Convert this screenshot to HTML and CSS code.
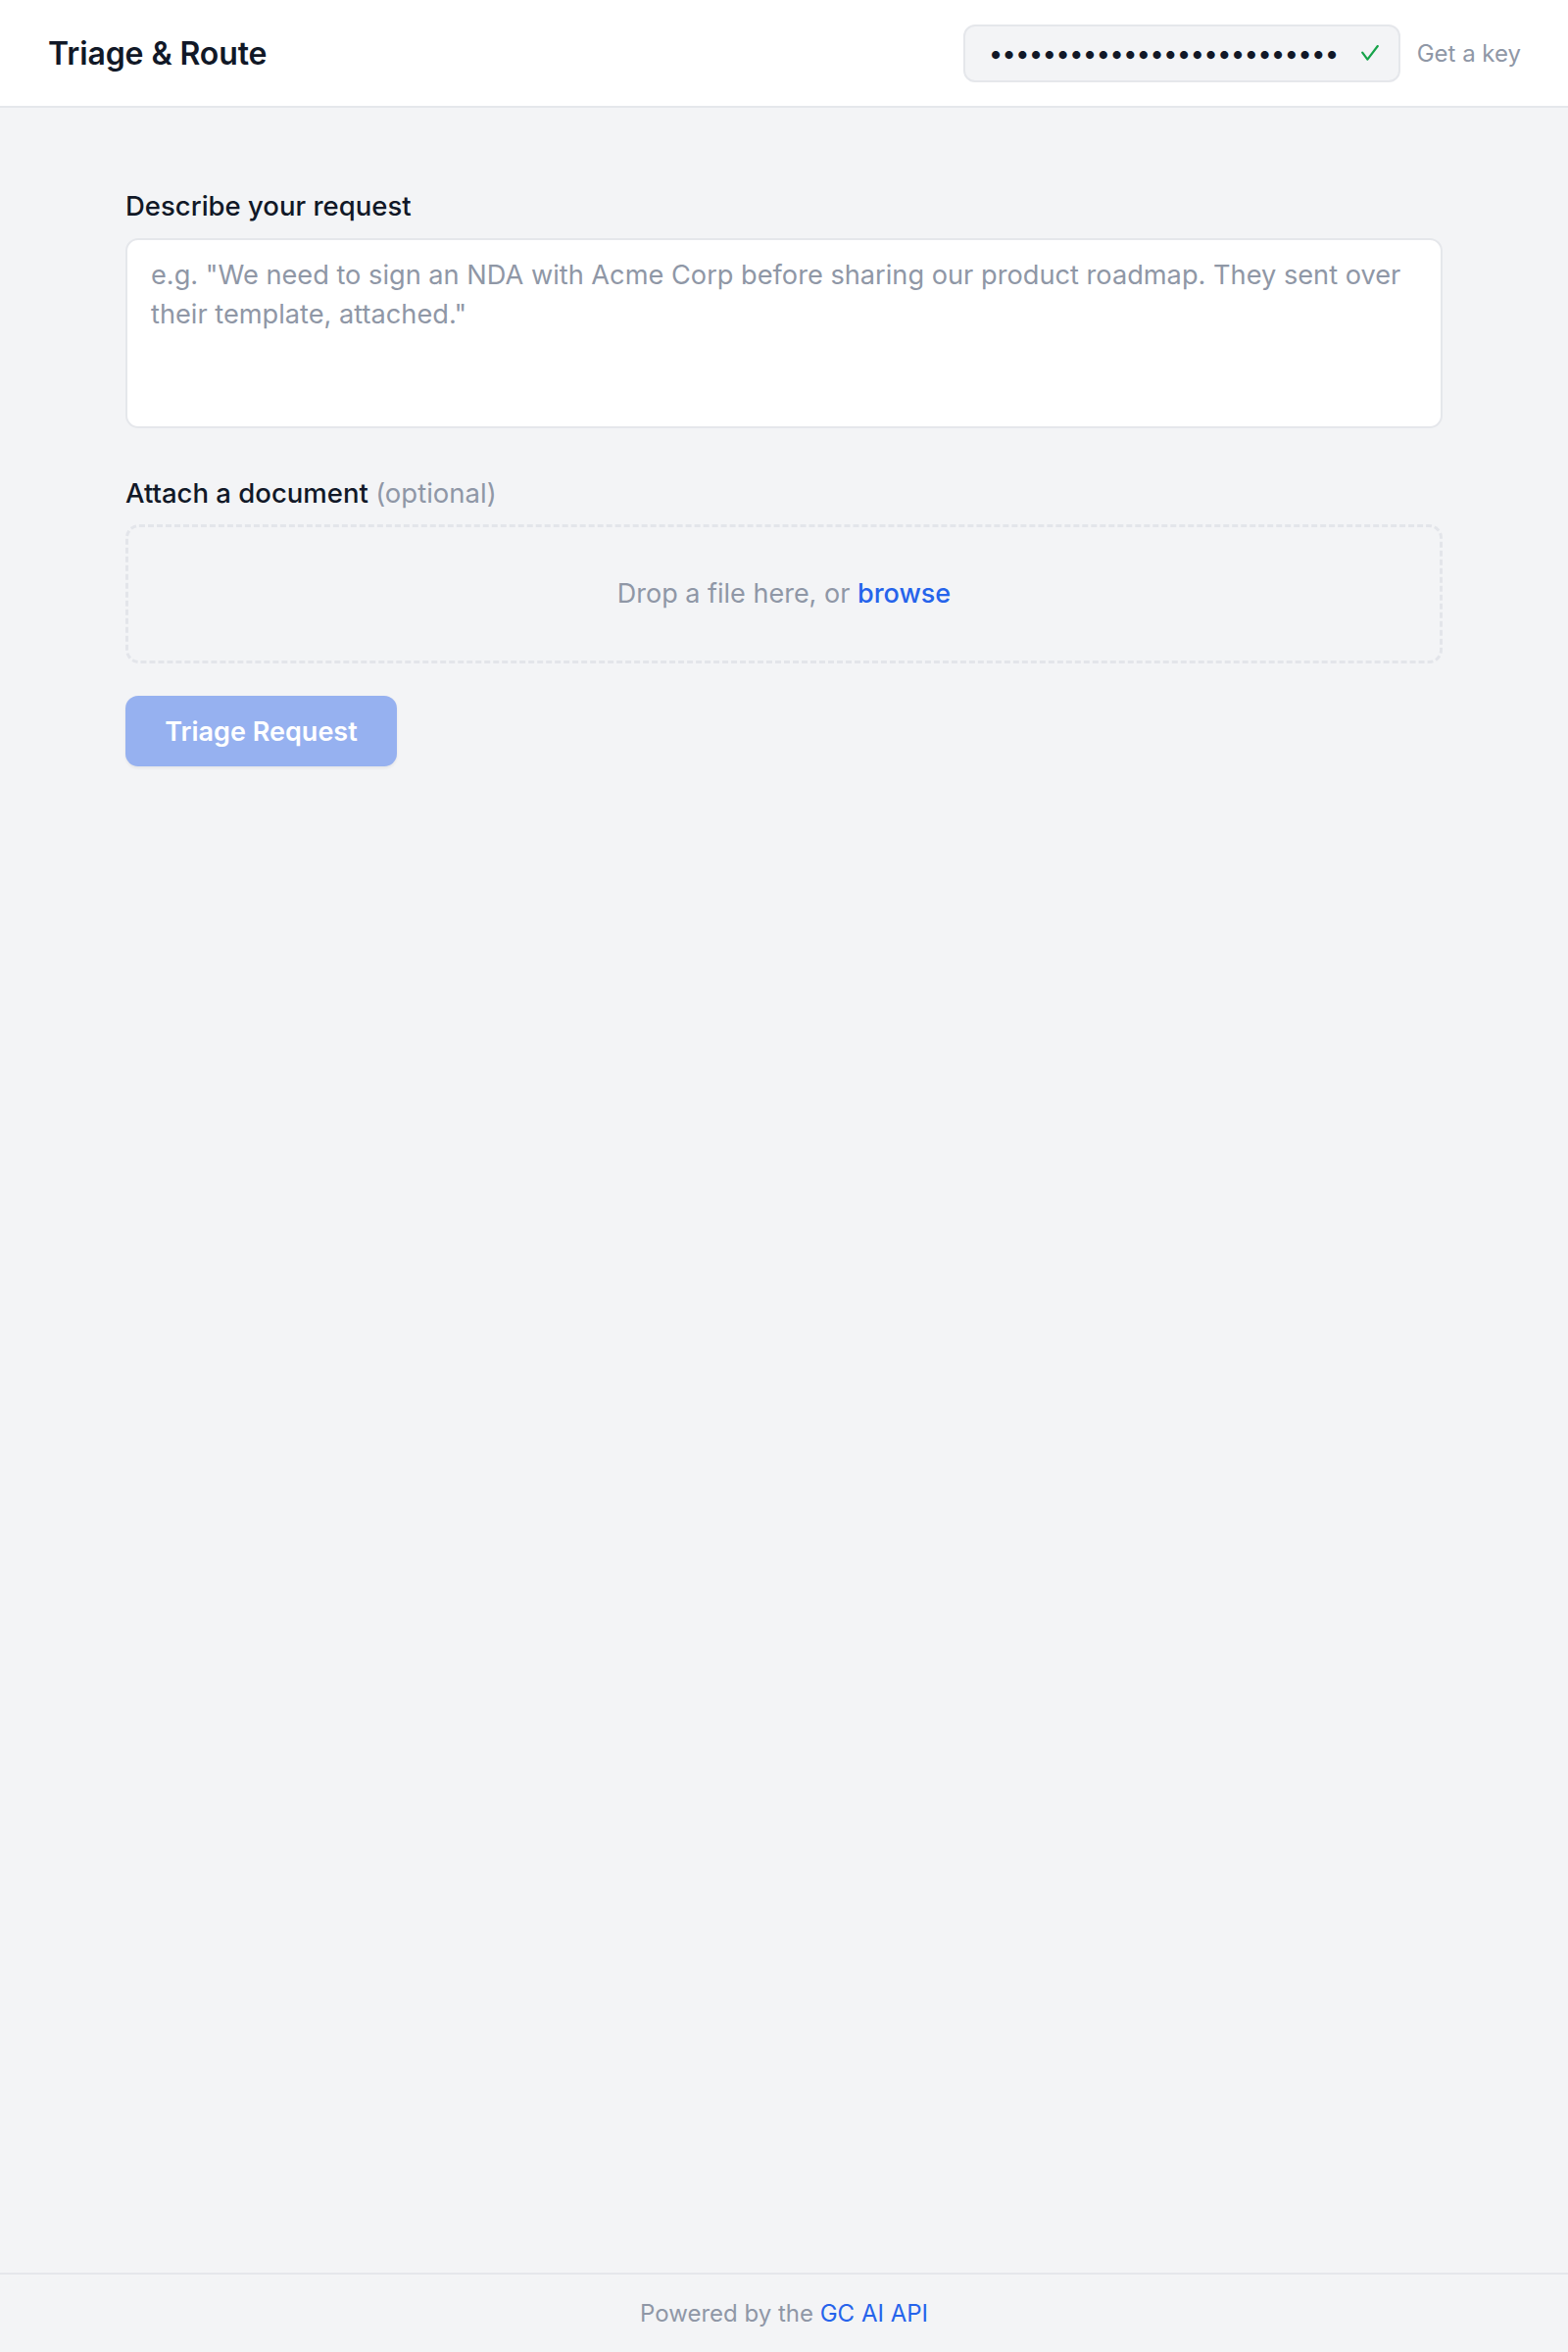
FILE: index.html
```html
<!DOCTYPE html>
<html lang="en">
<head>
<meta charset="utf-8">
<title>Triage &amp; Route</title>
<link rel="stylesheet" href="styles.css">
</head>
<body>
<header class="topbar">
  <h1 class="brand">Triage &amp; Route</h1>
  <div class="key-area">
    <div class="key-box">
      <input class="key-input" type="password" value="gcai_sk_live_0123456789abcdefghij" aria-label="API key">
      <svg class="key-check" width="18" height="16" viewBox="0 0 18 16" aria-hidden="true">
        <path d="M1.2 7.6 L6.4 14.6 L16.8 1" fill="none" stroke="#16a34a" stroke-width="2.2" stroke-linecap="round" stroke-linejoin="round"/>
      </svg>
    </div>
    <a class="key-link" href="#">Get a key</a>
  </div>
</header>

<main class="main">
  <form class="form">
    <label class="field-label" for="req">Describe your request</label>
    <textarea id="req" class="request" placeholder="e.g. &quot;We need to sign an NDA with Acme Corp before sharing our product roadmap. They sent over their template, attached.&quot;"></textarea>

    <label class="field-label second">Attach a document <span class="optional">(optional)</span></label>
    <div class="dropzone">
      <span>Drop a file here, or <a class="browse" href="#">browse</a></span>
    </div>

    <button class="submit" type="button" disabled>Triage Request</button>
  </form>
</main>

<footer class="footer">
  Powered by the <a class="footer-link" href="#">GC AI API</a>
</footer>
</body>
</html>
```

FILE: styles.css
```css
* {
  box-sizing: border-box;
}

html, body {
  margin: 0;
  padding: 0;
}

body {
  min-height: 100vh;
  display: flex;
  flex-direction: column;
  background: #f3f4f6;
  font-family: Inter, "Noto Sans", "Liberation Sans", sans-serif;
  color: #111827;
}

a {
  text-decoration: none;
}

.topbar {
  height: 110px;
  background: #ffffff;
  border-bottom: 2px solid #e5e7eb;
  display: flex;
  align-items: center;
  justify-content: space-between;
  padding: 0 48px 0 49px;
}

.brand {
  margin: 0;
  font-size: 32px;
  font-weight: 600;
  letter-spacing: -0.1px;
  color: #111827;
}

.key-area {
  display: flex;
  align-items: center;
  gap: 17px;
}

.key-box {
  width: 446px;
  height: 59px;
  display: flex;
  align-items: center;
  background: #f3f4f6;
  border: 2px solid #e5e7eb;
  border-radius: 12px;
  padding: 0 20px 0 24px;
}

.key-input {
  flex: 1;
  min-width: 0;
  border: 0;
  outline: 0;
  background: transparent;
  font-family: Inter, "Noto Sans", sans-serif;
  font-size: 26px;
  color: #111827;
  padding: 0;
  margin-right: 24px;
  letter-spacing: -0.9px;
}

.key-check {
  flex: none;
  display: block;
}

.key-link {
  font-size: 24px;
  color: #8f97a6;
}

.main {
  flex: 1;
  padding: 80px 0 0;
}

.form {
  max-width: 1344px;
  margin: 0 auto;
  display: flex;
  flex-direction: column;
  align-items: flex-start;
}

.field-label {
  display: block;
  font-size: 27.5px;
  line-height: 40.5px;
  font-weight: 500;
  color: #111827;
  margin-bottom: 12px;
}

.field-label.second {
  margin-top: 46px;
}

.optional {
  font-weight: 400;
  color: #8f97a6;
}

.request {
  display: block;
  width: 100%;
  height: 194px;
  resize: none;
  background: #ffffff;
  border: 2px solid #e5e7eb;
  border-radius: 13px;
  padding: 16px 24px 13px;
  font-family: Inter, "Noto Sans", sans-serif;
  font-size: 27.2px;
  line-height: 40.5px;
  color: #111827;
  outline: none;
}

.request::placeholder {
  color: #8f97a6;
}

.dropzone {
  width: 100%;
  height: 142px;
  border: 3px dashed #e3e5ea;
  border-radius: 14px;
  display: flex;
  align-items: center;
  justify-content: center;
  font-size: 27px;
  line-height: 40.5px;
  color: #8f97a6;
}

.browse {
  color: #2563eb;
  font-weight: 500;
}

.submit {
  margin-top: 33px;
  width: 277px;
  height: 72px;
  border: 0;
  border-radius: 13px;
  background: #96b1f0;
  color: #ffffff;
  font-family: Inter, "Noto Sans", sans-serif;
  font-size: 27px;
  font-weight: 600;
  box-shadow: 0 1.5px 3px rgba(0, 0, 0, 0.06);
  padding: 0;
}

.footer {
  border-top: 2px solid #e5e7eb;
  height: 81px;
  display: flex;
  align-items: center;
  justify-content: center;
  font-size: 24px;
  color: #8f97a6;
  gap: 0.28em;
}

.footer-link {
  color: #2563eb;
}
```
